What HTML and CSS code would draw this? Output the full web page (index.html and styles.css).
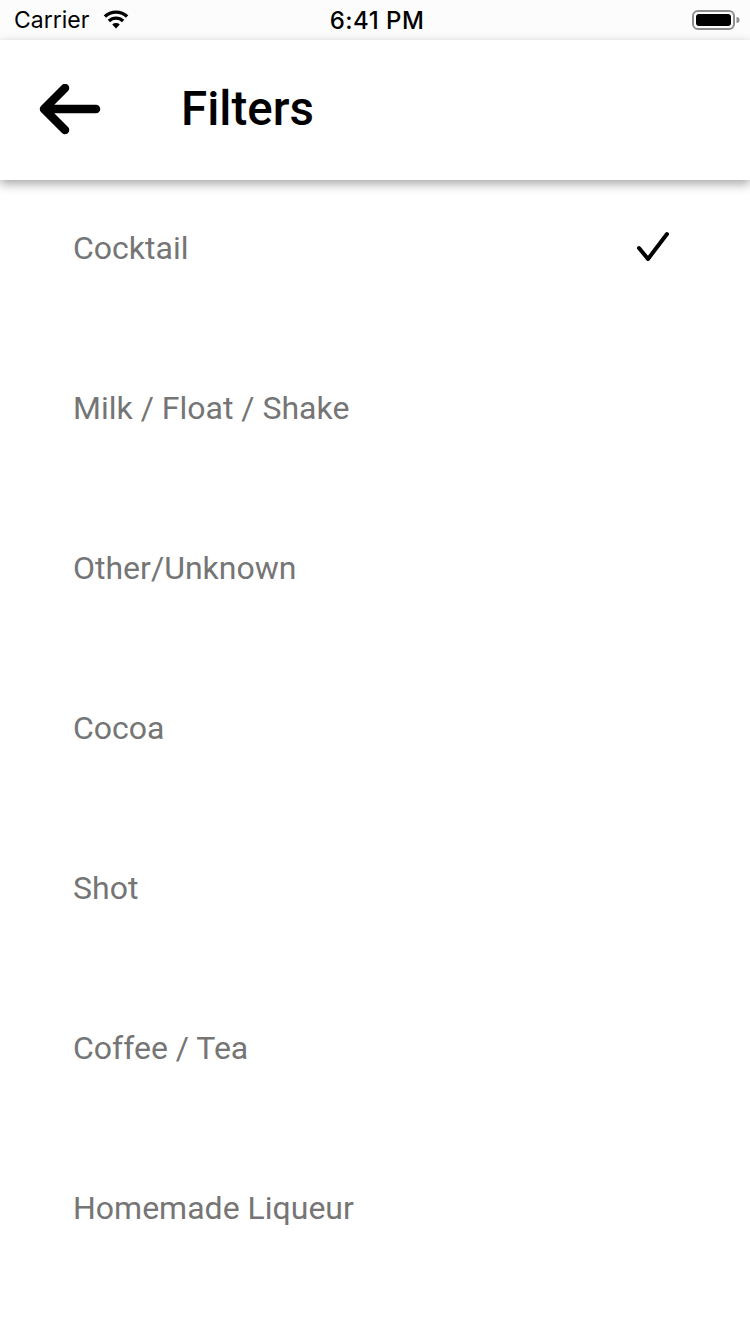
FILE: index.html
```html
<!DOCTYPE html>
<html>
<head>
<meta charset="utf-8">
<link rel="stylesheet" href="styles.css">
</head>
<body>
<div class="screen">
  <div class="statusbar">
    <div class="sb-left">
      <span class="carrier">Carrier</span>
      <svg class="wifi" width="28" height="20" viewBox="0 0 24 18">
        <path d="M12 17.5 L8.6 13.9 A5 5 0 0 1 15.4 13.9 Z" fill="#000"/>
        <path d="M5.6 10.8 A9.2 9.2 0 0 1 18.4 10.8" stroke="#000" stroke-width="3" fill="none"/>
        <path d="M2 6.8 A14.5 14.5 0 0 1 22 6.8" stroke="#000" stroke-width="3" fill="none"/>
      </svg>
    </div>
    <div class="sb-time">6:41 PM</div>
    <div class="sb-right">
      <svg width="48" height="22" viewBox="0 0 48 22">
        <rect x="1" y="2" width="41" height="18" rx="5" fill="none" stroke="#8e8e8e" stroke-width="2"/>
        <rect x="4" y="5" width="35" height="12" rx="3" fill="#000"/>
        <path d="M44.5 8 A3 3 0 0 1 44.5 14 Z" fill="#8e8e8e"/>
      </svg>
    </div>
  </div>
  <header class="header">
    <div class="back">
      <svg width="64" height="52" viewBox="0 0 64 52">
        <path d="M58 25 L6 25 M27 4 L6 25 L27 46" stroke="#000" stroke-width="8.5" stroke-linecap="round" stroke-linejoin="round" fill="none"/>
      </svg>
    </div>
    <h1 class="title">Filters</h1>
  </header>
  <ul class="list">
    <li class="row"><span class="label">Cocktail</span>
      <svg class="check" width="34" height="32" viewBox="0 0 34 32">
        <path d="M3 17 L12 28 L31 3" stroke="#000" stroke-width="4" stroke-linecap="round" stroke-linejoin="round" fill="none"/>
      </svg>
    </li>
    <li class="row"><span class="label">Milk / Float / Shake</span></li>
    <li class="row"><span class="label">Other/Unknown</span></li>
    <li class="row"><span class="label">Cocoa</span></li>
    <li class="row"><span class="label">Shot</span></li>
    <li class="row"><span class="label">Coffee / Tea</span></li>
    <li class="row"><span class="label">Homemade Liqueur</span></li>
  </ul>
</div>
</body>
</html>
```

FILE: styles.css
```css
* { box-sizing: border-box; }
html, body { margin: 0; padding: 0; background: #fff; }
body { font-family: Roboto, "Noto Sans", sans-serif; }
.screen { width: 750px; height: 1334px; overflow: hidden; position: relative; }

.statusbar {
  height: 40px;
  display: flex;
  align-items: center;
  justify-content: space-between;
  padding: 0 10px 0 14px;
  background: #fcfcfc;
  font-family: Inter, "Liberation Sans", sans-serif;
  font-size: 23px;
  color: #000;
}
.sb-left { display: flex; align-items: center; gap: 13px; width: 200px; }
.wifi { margin-top: -2px; }
.sb-time { font-weight: 500; font-size: 24px; letter-spacing: 0.5px; }
.sb-right { width: 200px; display: flex; justify-content: flex-end; }

.header {
  height: 140px;
  display: flex;
  align-items: center;
  background: #fff;
  box-shadow: 0 4px 10px rgba(0,0,0,0.35);
  position: relative;
  z-index: 2;
}
.back { width: 181px; padding-left: 38px; display: flex; align-items: center; }
.title {
  margin: 0;
  font-family: Roboto, sans-serif;
  font-weight: 500;
  font-size: 47.5px;
  color: #000;
  margin-top: -2px;
}

.list { list-style: none; margin: 0; padding: 0; }
.row {
  height: 160px;
  display: flex;
  align-items: flex-start;
  justify-content: space-between;
  padding: 45px 80px 0 73px;
}
.label {
  font-size: 32px;
  line-height: 46px;
  color: #757575;
}
.check { margin-top: 6px; }
```
